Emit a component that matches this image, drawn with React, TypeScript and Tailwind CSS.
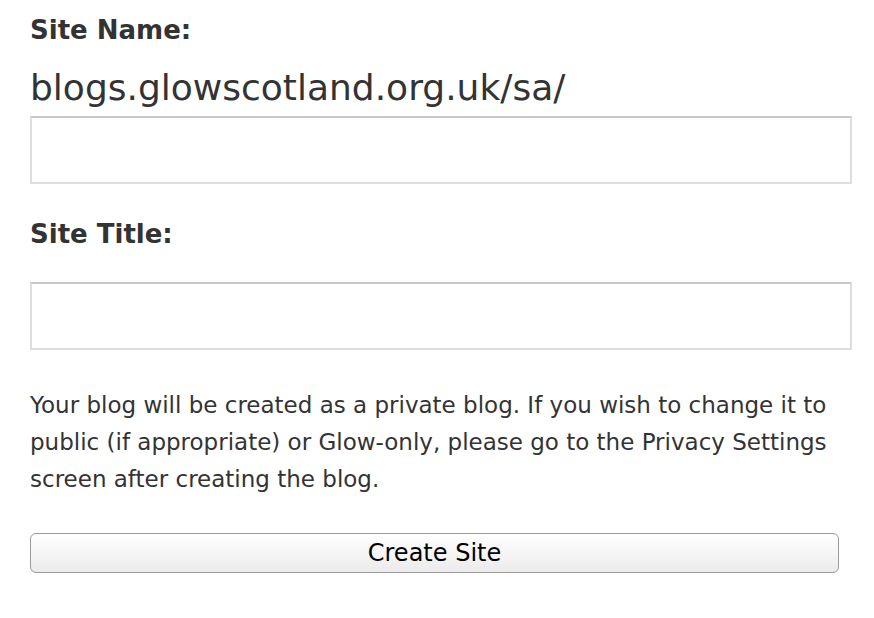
export default function App() {
  return (
    <div className="min-h-[618px] w-[874px] bg-white font-['DejaVu_Sans',sans-serif] text-[#333]">
      <div className="pl-[30px] pr-[22px] pt-[14px]">
        <label className="block text-[26px] font-bold leading-[32px]">Site Name:</label>
        <div className="mt-[22px] text-[36px] leading-[40px]">blogs.glowscotland.org.uk/sa/</div>
        <input
          type="text"
          className="mt-[8px] block h-[68px] w-[822px] border-2 border-[#dedede] border-t-[#c8c8c8] bg-white outline-none"
        />
        <label className="mt-[34px] block text-[26px] font-bold leading-[32px]">Site Title:</label>
        <input
          type="text"
          className="mt-[32px] block h-[68px] w-[822px] border-2 border-[#dedede] border-t-[#c8c8c8] bg-white outline-none"
        />
        <p className="mt-[37px] w-[822px] text-[23px] leading-[37px]">
          Your blog will be created as a private blog. If you wish to change it to public (if
          appropriate) or Glow-only, please go to the Privacy Settings screen after creating the
          blog.
        </p>
        <button
          type="button"
          className="mt-[35px] block h-[40px] w-[809px] rounded-[6px] border border-[#9a9a9a] bg-gradient-to-b from-white to-[#ebebeb] text-[24px] text-black"
        >
          Create Site
        </button>
      </div>
    </div>
  )
}
